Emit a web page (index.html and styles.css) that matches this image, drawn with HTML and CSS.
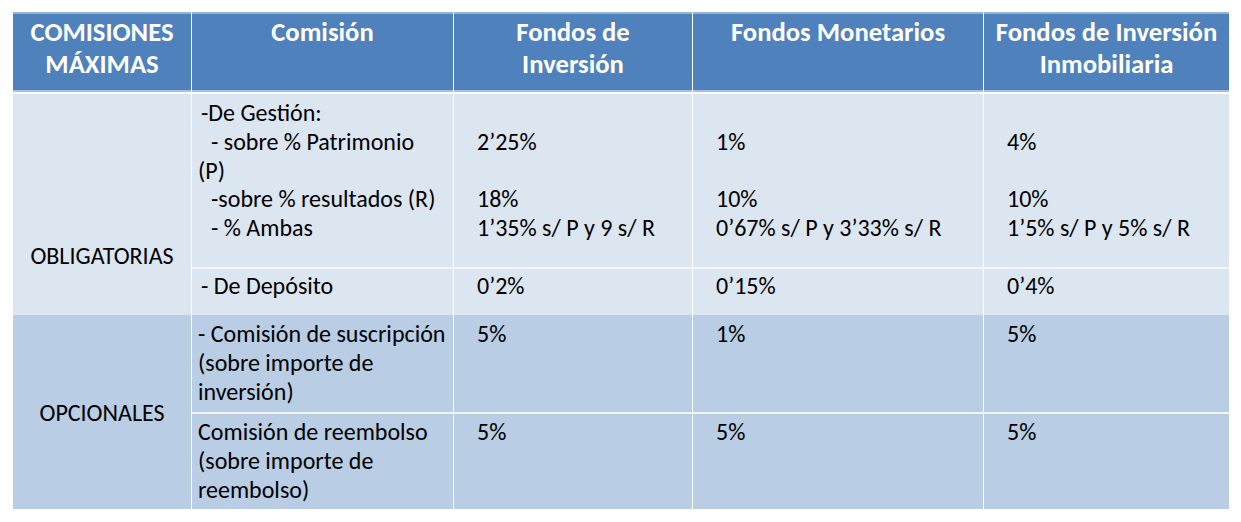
FILE: index.html
```html
<!DOCTYPE html>
<html lang="es">
<head>
<meta charset="utf-8">
<title>Comisiones máximas</title>
<link rel="stylesheet" href="styles.css">
</head>
<body>
<div class="table">
  <div class="th">COMISIONES<br>MÁXIMAS</div>
  <div class="th">Comisión</div>
  <div class="th">Fondos de<br>Inversión</div>
  <div class="th">Fondos Monetarios</div>
  <div class="th">Fondos de Inversión<br>Inmobiliaria</div>

  <div class="cat oblig first">OBLIGATORIAS</div>
  <div class="td light first desc">
    <div class="l in1">-De Gestión:</div>
    <div class="l in2">- sobre % Patrimonio</div>
    <div class="l">(P)</div>
    <div class="l in2">-sobre % resultados (R)</div>
    <div class="l in2">- % Ambas</div>
  </div>
  <div class="td light first val">
    <div class="l">&nbsp;</div>
    <div class="l">2’25%</div>
    <div class="l">&nbsp;</div>
    <div class="l">18%</div>
    <div class="l">1’35% s/ P y 9 s/ R</div>
  </div>
  <div class="td light first val">
    <div class="l">&nbsp;</div>
    <div class="l">1%</div>
    <div class="l">&nbsp;</div>
    <div class="l">10%</div>
    <div class="l">0’67% s/ P y 3’33% s/ R</div>
  </div>
  <div class="td light first val">
    <div class="l">&nbsp;</div>
    <div class="l">4%</div>
    <div class="l">&nbsp;</div>
    <div class="l">10%</div>
    <div class="l">1’5% s/ P y 5% s/ R</div>
  </div>

  <div class="td light sep desc short"><div class="l in1">- De Depósito</div></div>
  <div class="td light sep val short"><div class="l">0’2%</div></div>
  <div class="td light sep val short"><div class="l">0’15%</div></div>
  <div class="td light sep val short"><div class="l">0’4%</div></div>

  <div class="cat opc">OPCIONALES</div>
  <div class="td dark desc">
    <div class="l">- Comisión de suscripción</div>
    <div class="l">(sobre importe de</div>
    <div class="l">inversión)</div>
  </div>
  <div class="td dark val"><div class="l">5%</div></div>
  <div class="td dark val"><div class="l">1%</div></div>
  <div class="td dark val"><div class="l">5%</div></div>

  <div class="td dark sep desc last">
    <div class="l">Comisión de reembolso</div>
    <div class="l">(sobre importe de</div>
    <div class="l">reembolso)</div>
  </div>
  <div class="td dark sep val last"><div class="l">5%</div></div>
  <div class="td dark sep val last"><div class="l">5%</div></div>
  <div class="td dark sep val last"><div class="l">5%</div></div>
</div>
</body>
</html>
```

FILE: styles.css
```css
html, body {
  margin: 0;
  padding: 0;
  background: #ffffff;
}

body {
  padding: 12px 0 0 13px;
  font-family: "Carlito", "Calibri", "Lato", "Liberation Sans", sans-serif;
  color: #000000;
}

.table {
  display: grid;
  width: 1216px;
  grid-template-columns: 178px 261px 238px 290px 245px;
  grid-template-rows: 80px 175px 48px 97px 97px;
  column-gap: 1px;
  background: #ffffff;
}

.th {
  box-sizing: border-box;
  background: #4f81bd;
  border-top: 2px solid #95b3d7;
  border-bottom: 2px solid #a7bfe0;
  color: #ffffff;
  font-weight: bold;
  font-size: 26.67px;
  line-height: 32px;
  text-align: center;
  padding-top: 2px;
  white-space: nowrap;
}

.td {
  box-sizing: border-box;
  font-size: 24px;
  line-height: 28.75px;
  padding-top: 5px;
  white-space: nowrap;
}

.light { background: #dce6f1; }
.dark { background: #b9cde5; }

.first { border-top: 2px solid #ffffff; }
.sep { border-top: 2px solid #f2f6fb; }
.short { padding-top: 3px; }
.last { padding-top: 4px; }

.desc { padding-left: 6px; }
.val { padding-left: 23px; }

.in1 { padding-left: 3px; }
.in2 { padding-left: 13px; }

.cat {
  box-sizing: border-box;
  font-size: 24px;
  line-height: 29px;
  text-align: center;
  grid-row: span 2;
}

.oblig {
  background: #dce6f1;
  padding-top: 147px;
}

.opc {
  background: #b9cde5;
  display: flex;
  align-items: center;
  justify-content: center;
}
```
